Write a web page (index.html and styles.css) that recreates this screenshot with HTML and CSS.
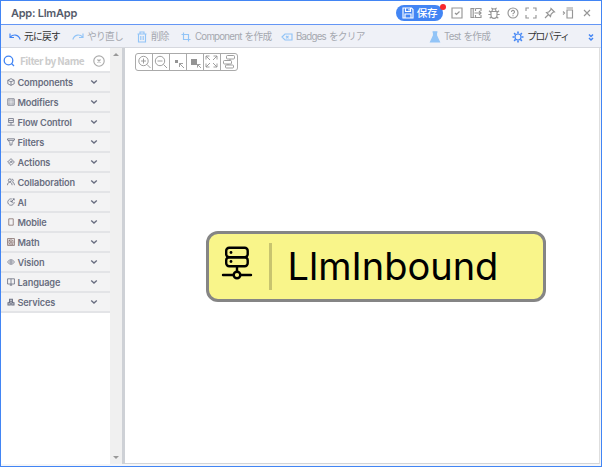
FILE: index.html
```html
<!DOCTYPE html>
<html lang="ja">
<head>
<meta charset="utf-8">
<title>App: LlmApp</title>
<link rel="stylesheet" href="styles.css">
</head>
<body>
<div class="window">
  <header class="titlebar">
    <h1 class="title">App: LlmApp</h1>
    <div class="window-tools">
      <button class="save"><svg class="i12" viewBox="0 0 12 12"><path d="M1 1h8.500L11 2.500V11H1zM3.500 1v3.500h5V1M3 11V7h6v4M7 2v1.500"/></svg><span>保存</span><i class="dot"></i></button>
      <svg class="i12" viewBox="0 0 12 12"><path d="M1 1h10v10H1zM4 6l1.500 1.500L8.500 4.500"/></svg>
      <svg class="i12" viewBox="0 0 12 12"><path d="M4.500 1.500H1v9h3.500M3.200 1.500v9M5.500 1.500H11v2.500M11 8v2.500H5.500V8M5.500 1.500V4M4.500 6H11M9 4l2 2-2 2"/></svg>
      <svg class="i12" viewBox="0 0 12 12"><path d="M3 4.500h6v3.500a3 3.300 0 0 1-6 0zM4 4.500a2 2.800 0 0 1 4 0M3 5.500L1 3.700M9 5.500l2-1.800M3 7.500H.3M9 7.500h2.700M3.700 9.500L1.700 11.300M8.300 9.500l2 1.800M4.500 2.300L3.500 .8M7.500 2.300L8.500 .8"/></svg>
      <svg class="i12" viewBox="0 0 12 12"><circle cx="6" cy="6" r="5"/><path d="M4.500 5a1.500 1.500 0 1 1 2 1.300Q6 6.500 6 7.200M6 8.200v1"/></svg>
      <svg class="i12" viewBox="0 0 12 12"><path d="M1 4V1h3M8 1h3v3M11 8v3H8M4 11H1V8"/></svg>
      <svg class="i12" viewBox="0 0 12 12"><path d="M7 1.500L10.500 5 9 5.300 7 7.300 6.500 9.500 2.500 5.500 4.700 5 6.700 3zM4.500 7.500L1 11"/></svg>
      <svg class="i12" viewBox="0 0 12 12"><path d="M5 3h5.500v8H5zM4.500 1h6.500M1 4.500L2.500 6 1 7.500"/></svg>
      <svg class="i12" viewBox="0 0 12 12"><path d="M3 3l6 6M9 3L3 9"/></svg>
    </div>
  </header>
  <nav class="toolbar">
    <span class="tool active undo"><svg class="i12" viewBox="0 0 12 12"><path d="M1 2.500v4h4M1 6.300C4 3 9.500 3 11.200 8.500"/></svg><b class="t-undo">元に戻す</b></span>
    <span class="tool redo"><svg class="i12" viewBox="0 0 12 12"><path d="M11 2.500v4H7M11 6.300C8 3 2.500 3 .8 8.500"/></svg><b class="t-redo">やり直し</b></span>
    <span class="tool delete"><svg class="i12" viewBox="0 0 12 12"><path d="M1.500 3h9M4 3V1h4v2M2.500 3v8h7V3M4.800 5v4M7.200 5v4"/></svg><b class="t-del">削除</b></span>
    <span class="tool component"><svg class="i12" viewBox="0 0 12 12"><path d="M3.500 1.500v7h7M1.500 3.500h7v7"/></svg><b class="t-comp">Component を作成</b></span>
    <span class="tool badges"><svg class="i12" viewBox="0 0 12 12"><path d="M1 6l3-3h7v6H4zM5 4.800l2.500 2.500M7.500 4.800L5 7.300"/></svg><b class="t-badge">Badges をクリア</b></span>
    <span class="tool test"><svg class="i12" viewBox="0 0 12 12"><path class="fill" d="M4.500 1h3v3.500l3 6.500h-9l3-6.500z"/><path d="M3.500 1h5"/></svg><b class="t-test">Test を作成</b></span>
    <span class="tool active props"><svg class="i12" viewBox="0 0 12 12"><circle cx="6" cy="6" r="3"/><path class="cog" d="M6 .5v2M6 9.500v2M.5 6h2M9.500 6h2M2.100 2.100l1.400 1.400M8.500 8.500l1.400 1.400M2.100 9.900l1.400-1.400M8.500 3.500l1.400-1.400"/></svg><b class="t-prop">プロパティ</b></span>
    <span class="tool active more"><svg class="i12" viewBox="0 0 12 12"><path d="M4 3.500l2 2 2-2M4 7l2 2 2-2"/></svg></span>
  </nav>
  <main class="body">
    <aside class="palette">
      <div class="filter"><svg class="i12 search" viewBox="0 0 12 12"><circle cx="5.500" cy="5.500" r="4.300"/><path d="M8.500 8.500l2.500 2.500"/></svg><span class="placeholder">Filter by Name</span><svg class="i12 clear" viewBox="0 0 12 12"><circle cx="6" cy="6" r="5.200"/><path d="M4.500 4.500l3 3M7.500 4.500l-3 3"/></svg></div>
      <div class="row"><svg class="i8" viewBox="0 0 10 10"><path d="M5 .8l4 2v4.400l-4 2-4-2V2.800zM1 2.800l4 2 4-2M5 4.800v4.400"/></svg><span>Components</span><svg class="chev" viewBox="0 0 8 6"><path d="M1.200 1.500L4 4l2.800-2.500"/></svg></div>
      <div class="row"><svg class="i8" viewBox="0 0 10 10"><path d="M1 1h8v8H1z"/><path class="faint" d="M3.500 1v8M6.500 1v8M1 3.500h8M1 6.500h8"/></svg><span>Modifiers</span><svg class="chev" viewBox="0 0 8 6"><path d="M1.200 1.500L4 4l2.800-2.500"/></svg></div>
      <div class="row"><svg class="i8" viewBox="0 0 10 10"><path d="M2 .7h6v5H2zM2 3.200h6M5 5.700v3M.5 9h9"/></svg><span>Flow Control</span><svg class="chev" viewBox="0 0 8 6"><path d="M1.200 1.500L4 4l2.800-2.500"/></svg></div>
      <div class="row"><svg class="i8" viewBox="0 0 10 10"><path d="M.7 1h8.600v1.500L6.300 5.500v3L3.700 9V5.500l-3-3zM1 3h8"/></svg><span>Filters</span><svg class="chev" viewBox="0 0 8 6"><path d="M1.200 1.500L4 4l2.800-2.500"/></svg></div>
      <div class="row"><svg class="i8" viewBox="0 0 10 10"><path d="M5 .8L9.200 5 5 9.200.8 5zM3.800 6.500V4.700h2.700M5.500 3.500l1.200 1.200-1.200 1.200"/></svg><span>Actions</span><svg class="chev" viewBox="0 0 8 6"><path d="M1.200 1.500L4 4l2.800-2.500"/></svg></div>
      <div class="row"><svg class="i8" viewBox="0 0 10 10"><circle cx="3.500" cy="3" r="1.900"/><path d="M.6 9c0-5 5.800-5 5.800 0M6 1.300a1.900 1.900 0 0 1 .8 3.600Q9.400 6 9.400 9"/></svg><span>Collaboration</span><svg class="chev" viewBox="0 0 8 6"><path d="M1.200 1.500L4 4l2.800-2.500"/></svg></div>
      <div class="row"><svg class="i8" viewBox="0 0 10 10"><path d="M6 1.200A4 4 0 1 0 9 5M3.500 4h3v2.500M5 5L9 1M7 1h2v2"/></svg><span>AI</span><svg class="chev" viewBox="0 0 8 6"><path d="M1.200 1.500L4 4l2.800-2.500"/></svg></div>
      <div class="row"><svg class="i8 mobile" viewBox="0 0 10 10"><path d="M2.200 1h5.600v8H2.200z"/></svg><span>Mobile</span><svg class="chev" viewBox="0 0 8 6"><path d="M1.200 1.500L4 4l2.800-2.500"/></svg></div>
      <div class="row"><svg class="i8 math" viewBox="0 0 10 10"><path d="M.7.7h8.600v8.600H.7zM5 .7v8.600M.7 5h8.600M2 3h2M3 2v2M6 3h2M2 6.500l2 1.500M4 6.500L2 8M6 6.500h2M6 8h2"/></svg><span>Math</span><svg class="chev" viewBox="0 0 8 6"><path d="M1.200 1.500L4 4l2.800-2.500"/></svg></div>
      <div class="row"><svg class="i8" viewBox="0 0 10 10"><path d="M.6 5Q5-.8 9.400 5 5 10.800.6 5z"/><circle cx="5" cy="5" r="1.500"/></svg><span>Vision</span><svg class="chev" viewBox="0 0 8 6"><path d="M1.200 1.500L4 4l2.800-2.500"/></svg></div>
      <div class="row"><svg class="i8" viewBox="0 0 10 10"><path d="M.7 1h8.600v6.500H.7zM5 1v8M3.500 9h3"/></svg><span>Language</span><svg class="chev" viewBox="0 0 8 6"><path d="M1.200 1.500L4 4l2.800-2.500"/></svg></div>
      <div class="row"><svg class="i8 services" viewBox="0 0 10 10"><path d="M3.300 1.500h3.400v2.500H3.300zM1.300 6h2.700v2.700H1.300zM6 6h2.700v2.700H6zM2.500 5.500L4 4M7.500 5.500L6 4"/></svg><span>Services</span><svg class="chev" viewBox="0 0 8 6"><path d="M1.200 1.500L4 4l2.800-2.500"/></svg></div>
    </aside>
    <div class="scrollbar"><i class="up"></i><i class="down"></i></div>
    <div class="splitter"></div>
    <section class="canvas">
      <div class="zoombar">
        <span><svg viewBox="0 0 16 16"><circle cx="7.500" cy="7" r="4.700"/><path d="M11 10.500l3.500 3.500M5 7h5M7.500 4.500v5"/></svg></span>
        <span><svg viewBox="0 0 16 16"><circle cx="7" cy="7" r="4.700"/><path d="M10.500 10.500L14 14M4.500 7h5"/></svg></span>
        <span><svg viewBox="0 0 16 16"><path class="solid" d="M5 6h3v3H5z"/><path d="M14 14l-4.500-4.500M9.500 13V9.500H13"/></svg></span>
        <span><svg viewBox="0 0 16 16"><path class="solid" d="M4 5h6v6H4z"/><path d="M14 14l-3.500-3.500M10.500 13.500v-3H13.500"/></svg></span>
        <span><svg viewBox="0 0 16 16"><path d="M2 5.500V2H5.500M2 2l4 4M9.500 2H13V5.500M13 2l-4 4M2 9.500V13H5.500M2 13l4-4M9.500 13H13V9.500M13 13l-4-4"/></svg></span>
        <span><svg viewBox="0 0 16 16"><rect x="5.500" y="1.500" width="8" height="3.500" rx="1"/><rect x="2.500" y="6.500" width="8" height="3.500" rx="1"/><rect x="4.500" y="11" width="8" height="3" rx="1"/><path d="M9 5v1.500M7 10v1"/></svg></span>
      </div>
      <div class="node">
        <svg class="node-icon" viewBox="0 0 30 34"><rect x="4.200" y="1.700" width="21.500" height="9.600" rx="3"/><rect x="4.200" y="11.300" width="21.500" height="9" rx="3"/><path d="M15 20.500v5M1 29h10.500M18.500 29H29"/><circle cx="15" cy="29" r="3.300"/><circle class="led" cx="9" cy="6.500" r="1.400"/><circle class="led" cx="9" cy="15.500" r="1.400"/></svg>
        <div class="node-divider"></div>
        <div class="node-label">LlmInbound</div>
      </div>
    </section>
  </main>
</div>
</body>
</html>
```
FILE: styles.css
```css
* { box-sizing: border-box; }
body { margin: 0; font-family: Inter, "Noto Sans CJK JP", sans-serif; }
svg { display: block; flex: none; fill: none; stroke: currentColor; overflow: visible; }
.window { width: 602px; height: 467px; border: 1px solid #4285f4; background: #f5f6f8; display: flex; flex-direction: column; }
.titlebar { height: 24px; flex: none; display: flex; align-items: center; justify-content: space-between; background: #fff; border-bottom: 1px solid #6496f5; padding: 0 8px 0 10px; }
.title { margin: 0; font-size: 11px; font-weight: 600; color: #555b6b; letter-spacing: -.25px; }
.window-tools { display: flex; align-items: center; gap: 6.550px; color: #969696; }
.i12 { width: 12px; height: 12px; stroke-width: 1.150; }
.save { position: relative; display: flex; align-items: center; gap: 3px; width: 47px; height: 16px; padding: 0 6px; margin-right: 2px; border: 0; border-radius: 8px; background: #4285f4; color: #fff; font: 500 10.500px Inter, "Noto Sans CJK JP", sans-serif; white-space: nowrap; }
.dot { position: absolute; top: -1px; right: -3px; width: 6px; height: 6px; border-radius: 50%; background: #f8282d; }
.toolbar { height: 23px; flex: none; display: flex; align-items: center; background: #eff1f7; border-bottom: 1px solid #d6d8de; padding: 2px 0 0 8px; }
.tool { display: flex; align-items: center; gap: 3px; color: #92c4f7; white-space: nowrap; }
.tool b { font-size: 9.700px; line-height: 14px; font-weight: 400; color: #a5a8af; }
.tool.active { color: #4285f4; }
.tool.active b { color: #333; }
.undo { width: 63px; }
.redo { width: 64px; }
.delete { width: 44px; }
.component { width: 101px; }
.badges { width: 148px; }
.test { width: 83px; }
.props { width: 73px; }
.tool .t-undo, .tool .t-redo { letter-spacing: -.7px; }
.tool .t-del { letter-spacing: -.9px; }
.t-comp, .t-badge, .t-test { letter-spacing: -.75px; }
.tool .t-comp, .tool .t-badge, .tool .t-test { word-spacing: 1px; font-size: 9.700px; }
.t-prop { letter-spacing: -1.200px; }
.fill { fill: currentColor; }
.cog { stroke-width: 1.600; }
.more .i12 { stroke-width: 1.500; }
.body { flex: 1; min-height: 0; display: flex; padding: 0 1px 2px 0; }
.palette { width: 109px; flex: none; background: #fff; }
.filter { height: 23px; display: flex; align-items: center; padding: 2px 5px 0 2px; }
.search { color: #4285f4; stroke-width: 1.300; }
.placeholder { flex: 1; margin-left: 5px; font: 700 10px/14px "Noto Sans CJK JP", sans-serif; color: #ccc; white-space: nowrap; letter-spacing: -.55px; }
.clear { color: #aaa; }
.row { height: 20px; display: flex; align-items: center; padding: 0 12px 0 6px; border-top: 2px solid #e3e4e7; background: #f3f3f4; color: #696e80; font-size: 9.200px; font-weight: 600; }
.row span { flex: 1; margin-left: 2.500px; letter-spacing: -.15px; }
.row:last-child { height: 22px; border-bottom: 2px solid #e3e4e7; }
.i8 { width: 8px; height: 8px; stroke-width: 1; }
.faint { stroke-width: .4; }
.mobile, .math { color: #85706d; }
.services { stroke-width: 1.400; }
.chev { width: 8px; height: 6px; stroke-width: 1.400; }
.scrollbar { width: 12px; flex: none; background: #f0f0f0; display: flex; flex-direction: column; justify-content: space-between; align-items: center; padding: 5px 0 5px; }
.up, .down { border: 3px solid transparent; }
.up { border-top: 0; border-bottom-color: #999; }
.down { border-bottom: 0; border-top-color: #999; }
.splitter { width: 3px; flex: none; background: #ced1d6; }
.canvas { flex: 1; background: #fff; border-right: 1px solid #dedede; border-bottom: 1px solid #d3d5d8; padding: 5px 0 0 10px; }
.zoombar { width: 103px; height: 18px; border: 1px solid #aaa; border-radius: 3px; display: grid; grid-template-columns: repeat(6, 1fr); color: #949494; }
.zoombar span + span { border-left: 1px solid #aaa; }
.zoombar svg { width: 16px; height: 16px; stroke-width: .9; }
.solid { fill: #949494; stroke: none; }
.node { width: 340px; height: 71px; margin: 160px 0 0 71px; border: 3px solid #858585; border-radius: 12px; background: #f9f58a; display: flex; align-items: center; padding-left: 13px; color: #000; }
.node-icon { width: 30px; height: 34px; stroke-width: 2.400; stroke-linecap: round; margin-top: -8px; }
.led { fill: #000; stroke: none; }
.node-divider { width: 3px; height: 47px; margin: 0 15.500px 0 17px; background: #c8c46f; }
.node-label { font-size: 38px; line-height: 48px; font-weight: 400; white-space: nowrap; margin-top: -1px; }
```
